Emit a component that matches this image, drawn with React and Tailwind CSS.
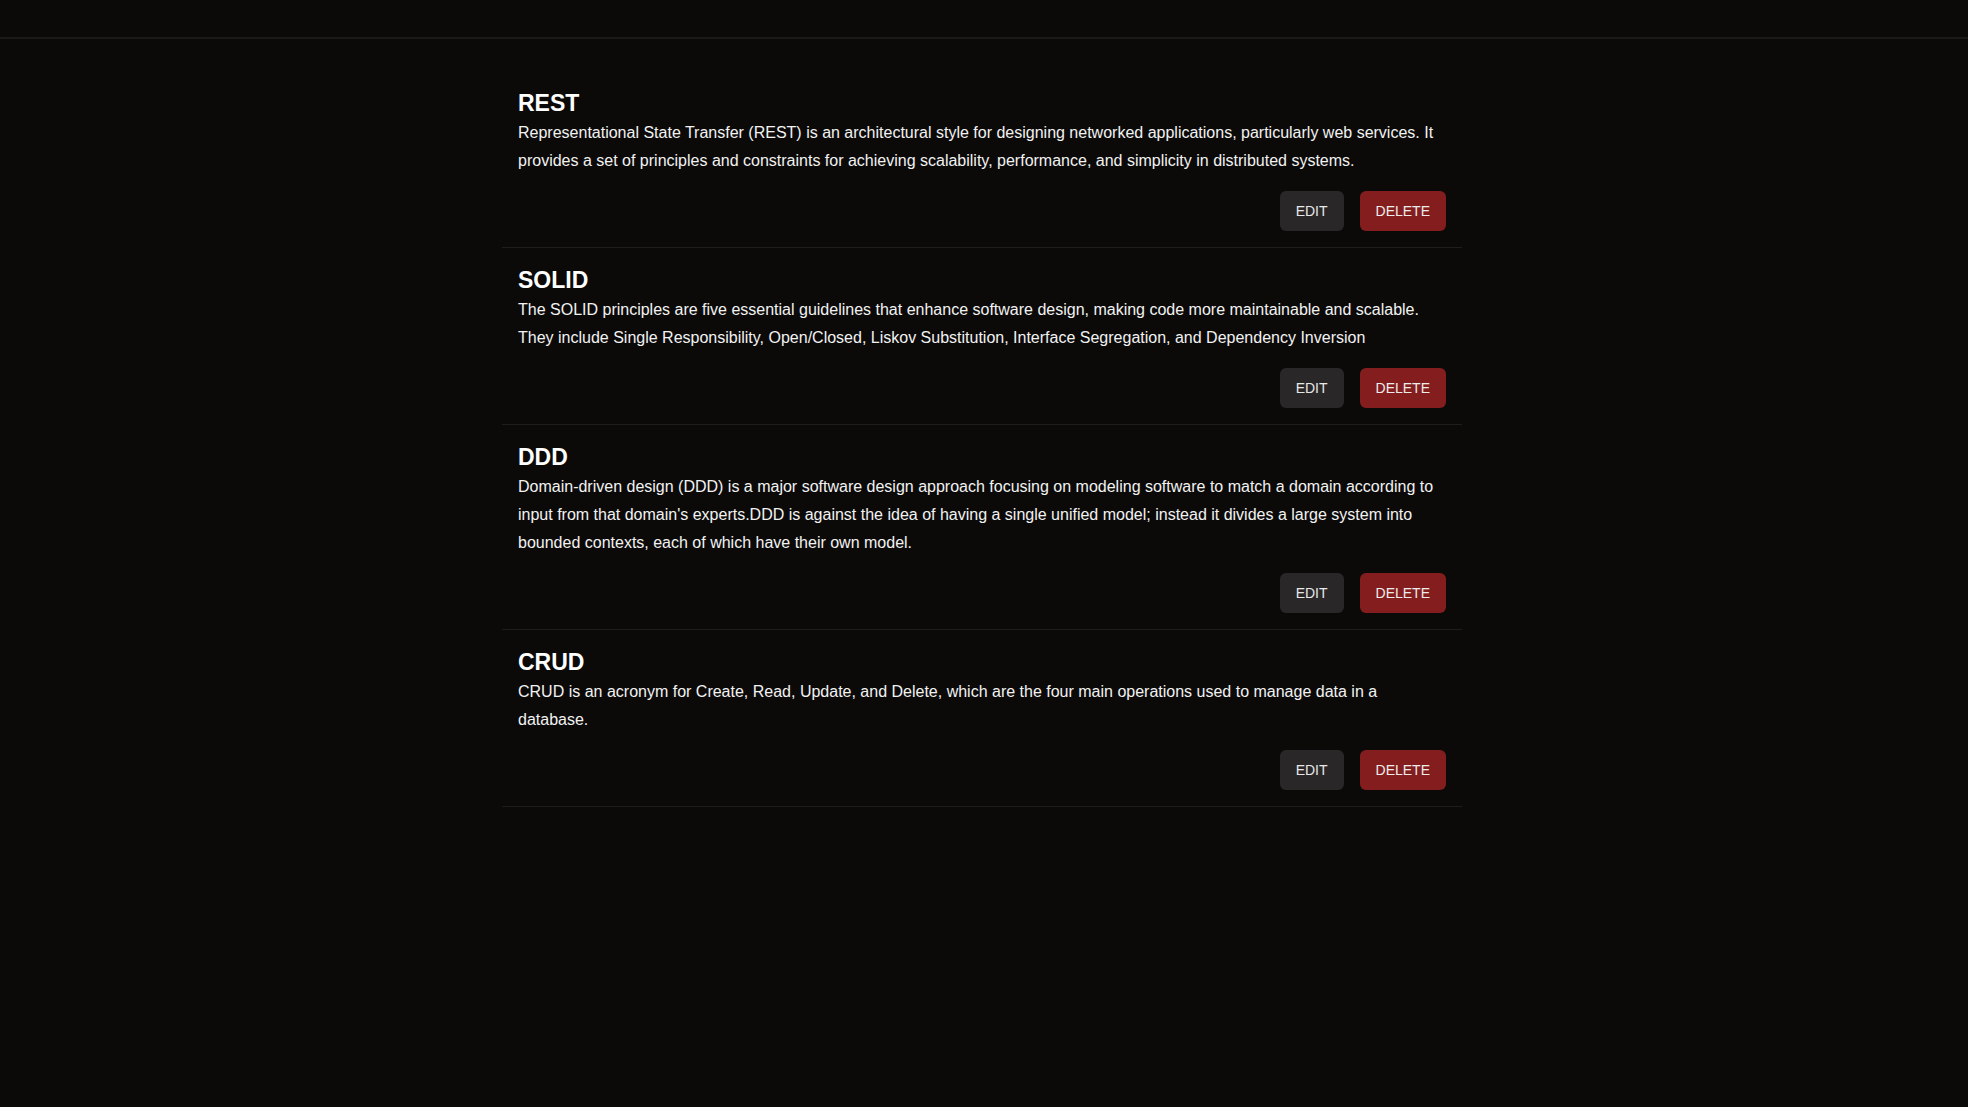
const concepts = [
  {
    id: 1,
    title: "REST",
    body: "Representational State Transfer (REST) is an architectural style for designing networked applications, particularly web services. It provides a set of principles and constraints for achieving scalability, performance, and simplicity in distributed systems.",
  },
  {
    id: 2,
    title: "SOLID",
    body: "The SOLID principles are five essential guidelines that enhance software design, making code more maintainable and scalable. They include Single Responsibility, Open/Closed, Liskov Substitution, Interface Segregation, and Dependency Inversion",
  },
  {
    id: 3,
    title: "DDD",
    body: "Domain-driven design (DDD) is a major software design approach focusing on modeling software to match a domain according to input from that domain's experts.DDD is against the idea of having a single unified model; instead it divides a large system into bounded contexts, each of which have their own model.",
  },
  {
    id: 4,
    title: "CRUD",
    body: "CRUD is an acronym for Create, Read, Update, and Delete, which are the four main operations used to manage data in a database.",
  },
];

function ConceptItem({ concept }) {
  return (
    <li className="p-4 border-b border-[#1e1d1c]">
      <h2 className="text-[23px] leading-8 font-bold text-white">{concept.title}</h2>
      <p className="text-base leading-7 text-[#f2f2f2]">{concept.body}</p>
      <div className="mt-4 flex justify-end gap-4">
        <button
          type="button"
          className="h-10 px-4 rounded-md bg-[#292727] text-sm text-[#e8e8e8] uppercase cursor-pointer"
        >
          Edit
        </button>
        <button
          type="button"
          className="h-10 px-4 rounded-md bg-[#841d1d] text-sm text-[#ececec] uppercase cursor-pointer"
        >
          Delete
        </button>
      </div>
    </li>
  );
}

export default function App() {
  return (
    <div className="min-h-screen bg-[#0b0a09] font-['Liberation_Sans',Arial,sans-serif]">
      {/* Top bar */}
      <header className="h-[39px] border-b-2 border-[#1b1a19]" />

      <main className="pt-8 pr-1">
        <ul className="max-w-[960px] mx-auto">
          {concepts.map((c) => (
            <ConceptItem key={c.id} concept={c} />
          ))}
        </ul>
      </main>
    </div>
  );
}
